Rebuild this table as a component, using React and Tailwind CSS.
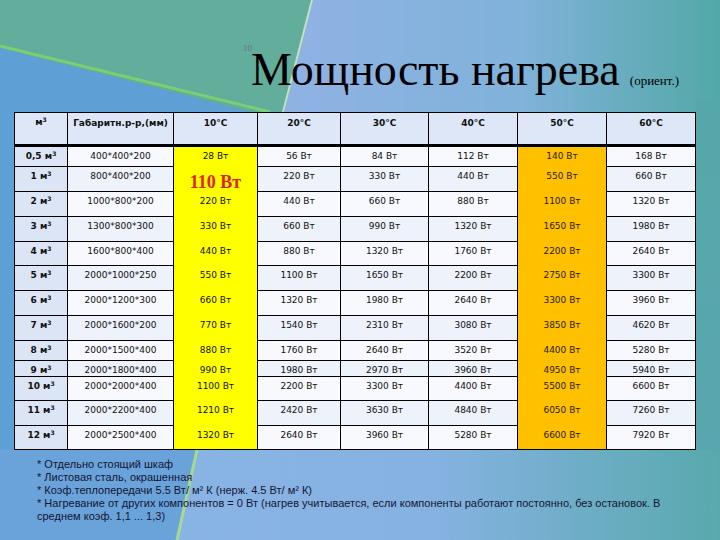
import React from "react";

const rows = [
  ["0,5", "400*400*200", "28 Вт", "56 Вт", "84 Вт", "112 Вт", "140 Вт", "168 Вт", "h-[21px]"],
  ["1", "800*400*200", "110 Вт", "220 Вт", "330 Вт", "440 Вт", "550 Вт", "660 Вт", "h-[25px]"],
  ["2", "1000*800*200", "220 Вт", "440 Вт", "660 Вт", "880 Вт", "1100 Вт", "1320 Вт", "h-[25px]"],
  ["3", "1300*800*300", "330 Вт", "660 Вт", "990 Вт", "1320 Вт", "1650 Вт", "1980 Вт", "h-[25px]"],
  ["4", "1600*800*400", "440 Вт", "880 Вт", "1320 Вт", "1760 Вт", "2200 Вт", "2640 Вт", "h-[24px]"],
  ["5", "2000*1000*250", "550 Вт", "1100 Вт", "1650 Вт", "2200 Вт", "2750 Вт", "3300 Вт", "h-[25px]"],
  ["6", "2000*1200*300", "660 Вт", "1320 Вт", "1980 Вт", "2640 Вт", "3300 Вт", "3960 Вт", "h-[25px]"],
  ["7", "2000*1600*200", "770 Вт", "1540 Вт", "2310 Вт", "3080 Вт", "3850 Вт", "4620 Вт", "h-[25px]"],
  ["8", "2000*1500*400", "880 Вт", "1760 Вт", "2640 Вт", "3520 Вт", "4400 Вт", "5280 Вт", "h-[20px]"],
  ["9", "2000*1800*400", "990 Вт", "1980 Вт", "2970 Вт", "3960 Вт", "4950 Вт", "5940 Вт", "h-[15px]"],
  ["10", "2000*2000*400", "1100 Вт", "2200 Вт", "3300 Вт", "4400 Вт", "5500 Вт", "6600 Вт", "h-[24px]"],
  ["11", "2000*2200*400", "1210 Вт", "2420 Вт", "3630 Вт", "4840 Вт", "6050 Вт", "7260 Вт", "h-[25px]"],
  ["12", "2000*2500*400", "1320 Вт", "2640 Вт", "3960 Вт", "5280 Вт", "6600 Вт", "7920 Вт", "h-[24px]"],
];

const heads = ["10°C", "20°C", "30°C", "40°C", "50°C", "60°C"];

const Backdrop = () => (
  <svg className="absolute inset-0" width="720" height="540" viewBox="0 0 720 540">
    <defs>
      <linearGradient id="topRight" x1="0" y1="0" x2="1" y2="0">
        <stop offset="0" stopColor="#8fb2e4" />
        <stop offset="0.55" stopColor="#80b2da" />
        <stop offset="1" stopColor="#52a8a6" />
      </linearGradient>
      <linearGradient id="bottom" x1="0" y1="0" x2="1" y2="0">
        <stop offset="0" stopColor="#8ab5e6" />
        <stop offset="0.6" stopColor="#86b2e2" />
        <stop offset="1" stopColor="#58a9ad" />
      </linearGradient>
      <linearGradient id="side" x1="0" y1="0" x2="0" y2="1">
        <stop offset="0" stopColor="#56a7a9" />
        <stop offset="1" stopColor="#5aa6b0" />
      </linearGradient>
    </defs>
    <rect width="720" height="540" fill="#5e9fd6" />
    <polygon points="312,0 720,0 720,112 284,112" fill="url(#topRight)" />
    <polygon points="0,0 312,0 284,112 250,112 0,48" fill="#63ad9c" />
    <rect x="696" y="100" width="24" height="360" fill="url(#side)" />
    <polygon points="0,450 720,450 720,540 0,540" fill="url(#bottom)" />
    <polygon points="0,450 196,450 176,540 0,540" fill="#6aa3da" />
    <line x1="0" y1="46" x2="270" y2="112" stroke="#7bcf72" strokeWidth="3" />
    <line x1="312" y1="0" x2="283" y2="112" stroke="#c4e0c2" strokeWidth="2" />
    <line x1="197" y1="450" x2="177" y2="540" stroke="#a9d98c" strokeWidth="3" />
  </svg>
);

const App = () => {
  return (
    <div className="relative w-[720px] h-[540px] overflow-hidden font-['DejaVu_Sans',sans-serif]">
      <Backdrop />
      <div className="relative">
        <div className="relative h-[112px] pl-[251px] pt-[47px] flex items-baseline gap-[10px] font-['Liberation_Serif',serif] text-black">
          <span className="absolute left-[243px] top-[42px] text-[9px] text-gray-500">10</span>
          <span className="text-[46px] leading-[46px]">Мощность нагрева</span>
          <span className="text-[13px]">(ориент.)</span>
        </div>

        <div className="pl-[14px]">
          <table className="table-fixed w-[681px] border-collapse border border-black text-[9px] text-[#111] text-center">
            <colgroup>
              <col className="w-[53px]" />
              <col className="w-[106px]" />
              <col className="w-[84px]" />
              <col className="w-[83px]" />
              <col className="w-[88px]" />
              <col className="w-[89px]" />
              <col className="w-[89px]" />
              <col className="w-[89px]" />
            </colgroup>
            <thead>
              <tr className="h-[33px] bg-[#dde7f7] border-b-[3px] border-black font-bold align-top">
                <th className="border-x border-black pt-[3px] font-bold">м<sup className="text-[6px]">3</sup></th>
                <th className="border-x border-black pt-[4px] font-bold">Габаритн.р-р,(мм)</th>
                {heads.map((h) => (
                  <th key={h} className="border-x border-black pt-[4px] font-bold">{h}</th>
                ))}
              </tr>
            </thead>
            <tbody>
              {rows.map((r, i) => {
                const bg = i % 2 === 0 ? "bg-[#f7f9fe]" : "bg-[#edf2fb]";
                return (
                  <tr key={r[0]} className={`${r[8]} align-top`}>
                    <td className="border border-black bg-[#dbe5f6] pt-[3px] leading-[12px] font-bold">
                      {r[0]} м<sup className="text-[6px]">3</sup>
                    </td>
                    <td className={`border border-black ${bg} pt-[3px] leading-[12px]`}>{r[1]}</td>
                    {i === 1 ? (
                      <td className="border-x border-black bg-[#ffff00] align-middle pt-[5px] leading-[18px] font-['Liberation_Serif',serif] font-bold text-[18px] text-[#e0231c]">
                        {r[2]}
                      </td>
                    ) : (
                      <td className="border-x border-black bg-[#ffff00] pt-[3px] leading-[12px]">{r[2]}</td>
                    )}
                    <td className={`border border-black ${bg} pt-[3px] leading-[12px]`}>{r[3]}</td>
                    <td className={`border border-black ${bg} pt-[3px] leading-[12px]`}>{r[4]}</td>
                    <td className={`border border-black ${bg} pt-[3px] leading-[12px]`}>{r[5]}</td>
                    <td className="border-x border-black bg-[#ffc000] pt-[3px] leading-[12px] text-[#2a1c00]">{r[6]}</td>
                    <td className={`border border-black ${bg} pt-[3px] leading-[12px]`}>{r[7]}</td>
                  </tr>
                );
              })}
            </tbody>
          </table>
        </div>

        <div className="pl-[37px] pt-[8px] pr-[20px] font-['Liberation_Sans',sans-serif] text-[11px] leading-[13px] text-[#131533]">
          <p>* Отдельно стоящий шкаф</p>
          <p>* Листовая сталь, окрашенная</p>
          <p>* Коэф.теплопередачи 5.5 Вт/ м² К (нерж. 4.5 Вт/ м² К)</p>
          <p>
            * Нагревание от других компонентов = 0 Вт (нагрев учитывается, если компоненты работают постоянно, без остановок. В
            <br />
            среднем коэф. 1,1 ... 1,3)
          </p>
        </div>
      </div>
    </div>
  );
};

export default App;
